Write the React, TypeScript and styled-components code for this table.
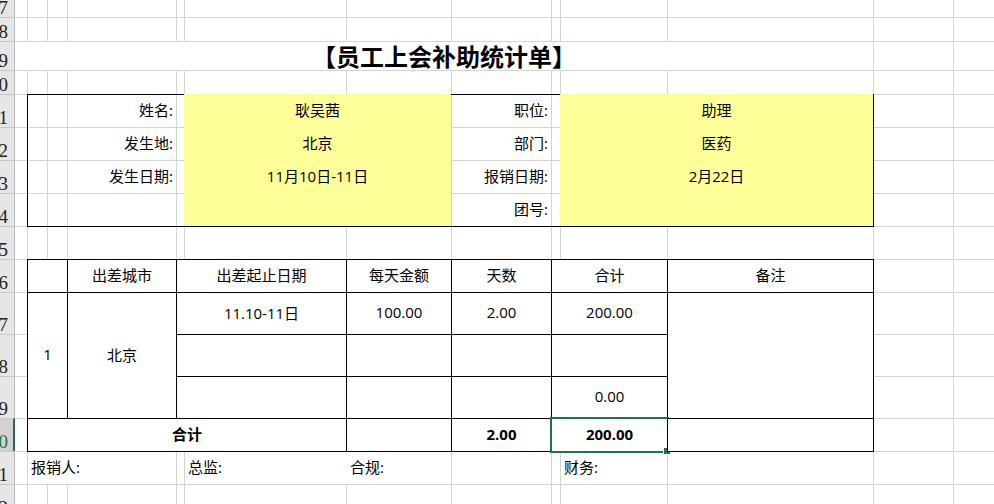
import React from 'react';
import styled, { createGlobalStyle, css } from 'styled-components';

const GRID = '#d4d4d4';
const YELLOW = '#ffff99';
const EXCEL_GREEN = '#217346';

const COLS = ['A', 'B', 'C', 'D', 'E', 'F', 'G', 'H', 'I', 'J', 'K', 'L', 'M'];
// first track is the row header; every other track starts with its gridline pixel
const COL_W = [15, 12, 20, 20, 109, 8, 162, 105, 100, 9, 107, 206, 80, 80];
const ROW_H = [18, 24, 29, 24, 33, 33, 33, 33, 33, 33, 42, 42, 42, 33, 33, 33];
const FIRST_ROW = 7;
const ROWS = ROW_H.map((_, i) => FIRST_ROW + i);

const cc = (a: string, b: string = a) => `${COLS.indexOf(a) + 2} / ${COLS.indexOf(b) + 3}`;
const rr = (a: number, b: number = a) => `${a - FIRST_ROW + 1} / ${b - FIRST_ROW + 2}`;

const INFO = [
  { row: 11, label: '姓名:', value: '耿吴茜', label2: '职位:', value2: '助理' },
  { row: 12, label: '发生地:', value: '北京', label2: '部门:', value2: '医药' },
  { row: 13, label: '发生日期:', value: '11月10日-11日', label2: '报销日期:', value2: '2月22日' },
  { row: 14, label: '', value: '', label2: '团号:', value2: '' },
];

const HEADERS: [string, string, string][] = [
  ['B', 'C', ''],
  ['D', 'D', '出差城市'],
  ['E', 'F', '出差起止日期'],
  ['G', 'G', '每天金额'],
  ['H', 'H', '天数'],
  ['I', 'J', '合计'],
  ['K', 'K', '备注'],
];

const DETAIL = [
  { row: 17, period: '11.10-11日', daily: '100.00', days: '2.00', total: '200.00' },
  { row: 18, period: '', daily: '', days: '', total: '' },
  { row: 19, period: '', daily: '', days: '', total: '0.00' },
];

const GlobalStyle = createGlobalStyle`
  *, *::before, *::after { box-sizing: border-box; }
  html, body {
    margin: 0;
    padding: 0;
    background: #fff;
    overflow: hidden;
  }
  body {
    font-family: "Open Sans", "Noto Sans CJK SC", sans-serif;
    color: #000;
  }
`;

const Sheet = styled.div`
  display: grid;
  grid-template-columns: ${COL_W.map((w) => `${w}px`).join(' ')};
  grid-template-rows: ${ROW_H.map((h) => `${h}px`).join(' ')};
  width: max-content;
  margin-top: -1px;
`;

const placed = css<{ $c: string; $r: string }>`
  grid-column: ${({ $c }) => $c};
  grid-row: ${({ $r }) => $r};
`;

const RowHead = styled.div<{ $r: string; $active?: boolean }>`
  grid-column: 1;
  grid-row: ${({ $r }) => $r};
  display: flex;
  align-items: flex-end;
  justify-content: flex-end;
  overflow: hidden;
  white-space: nowrap;
  border-top: 1px solid #c6c6c6;
  border-right: ${({ $active }) => ($active ? `2px solid ${EXCEL_GREEN}` : '1px solid #b9b9b9')};
  padding-right: ${({ $active }) => ($active ? 5 : 6)}px;
  background: ${({ $active }) => ($active ? '#d2d2d2' : '#e6e6e6')};
  color: ${({ $active }) => ($active ? EXCEL_GREEN : '#222')};
  font: 19px/19px "Liberation Serif", serif;
`;

const GridCell = styled.div<{ $c: string; $r: string; $edge: boolean }>`
  ${placed};
  border-top: 1px solid ${GRID};
  border-left: ${({ $edge }) => ($edge ? `1px solid ${GRID}` : 'none')};
`;

const Merged = styled.div<{ $c: string; $r: string }>`
  ${placed};
  display: flex;
  align-items: center;
  justify-content: center;
  background: #fff;
  border-top: 1px solid ${GRID};
`;

const Title = styled.h1`
  margin: 0;
  font-family: "Noto Sans CJK SC", sans-serif;
  font-size: 24px;
  font-weight: 700;
  line-height: 1;
`;

type Align = 'left' | 'center' | 'right';

const Cell = styled.div<{ $c: string; $r: string; $align?: Align; $fill?: string; $bold?: boolean }>`
  ${placed};
  position: relative;
  display: flex;
  align-items: center;
  justify-content: ${({ $align }) =>
    $align === 'left' ? 'flex-start' : $align === 'right' ? 'flex-end' : 'center'};
  padding: 0 3px 3px;
  white-space: nowrap;
  font-size: 15px;
  font-weight: ${({ $bold }) => ($bold ? 700 : 400)};
  background: ${({ $fill }) => $fill ?? 'transparent'};
`;

// a bordered table cell: its right/bottom border lands on the next gridline
const Box = styled(Cell)`
  background: #fff;
  border: 1px solid #000;
  margin: 0 -1px -1px 0;
`;

const Frame = styled.div<{ $c: string; $r: string }>`
  ${placed};
  border: 1px solid #000;
  margin: 0 -1px -1px 0;
  pointer-events: none;
`;

const FooterCell = styled(Cell)<{ $open?: boolean }>`
  background: #fff;
  border-top: 1px solid ${GRID};
  border-left: ${({ $open }) => ($open ? 'none' : `1px solid ${GRID}`)};
  padding-left: ${({ $open }) => ($open ? 4 : 3)}px;
`;

const Selection = styled.div`
  position: absolute;
  inset: -2px;
  border: 2px solid ${EXCEL_GREEN};
  pointer-events: none;
`;

const FillHandle = styled.span`
  position: absolute;
  right: -4px;
  bottom: -4px;
  width: 8px;
  height: 8px;
  background: ${EXCEL_GREEN};
  border: 1px solid #fff;
`;

export default function App() {
  return (
    <>
      <GlobalStyle />
      <Sheet>
        {ROWS.map((r) => (
          <RowHead key={`h${r}`} $r={rr(r)} $active={r === 20}>
            <span>{r}</span>
          </RowHead>
        ))}
        {ROWS.map((r) =>
          COLS.map((c) => <GridCell key={`${c}${r}`} $c={cc(c)} $r={rr(r)} $edge={c !== 'A'} />)
        )}

        <Merged $c={cc('A', 'K')} $r={rr(9)}>
          <Title>【员工上会补助统计单】</Title>
        </Merged>

        {INFO.map((it) => (
          <React.Fragment key={it.row}>
            <Cell $c={cc('D')} $r={rr(it.row)} $align="right">
              {it.label}
            </Cell>
            <Cell $c={cc('F', 'G')} $r={rr(it.row)} $fill={YELLOW}>
              {it.value}
            </Cell>
            <Cell $c={cc('H')} $r={rr(it.row)} $align="right">
              {it.label2}
            </Cell>
            <Cell $c={cc('J', 'K')} $r={rr(it.row)} $fill={YELLOW}>
              {it.value2}
            </Cell>
          </React.Fragment>
        ))}
        <Frame $c={cc('B', 'K')} $r={rr(11, 14)} />

        <FooterCell $c={cc('B', 'D')} $r={rr(21)} $align="left">报销人:</FooterCell>
        <FooterCell $c={cc('F')} $r={rr(21)} $align="left">总监:</FooterCell>
        <FooterCell $c={cc('G')} $r={rr(21)} $align="left" $open>合规:</FooterCell>
        <FooterCell $c={cc('J')} $r={rr(21)} $align="left">财务:</FooterCell>

        {HEADERS.map(([a, b, text]) => (
          <Box key={a} $c={cc(a, b)} $r={rr(16)}>
            {text}
          </Box>
        ))}

        <Box $c={cc('B', 'C')} $r={rr(17, 19)}>1</Box>
        <Box $c={cc('D')} $r={rr(17, 19)}>北京</Box>
        {DETAIL.map((d) => (
          <React.Fragment key={d.row}>
            <Box $c={cc('E', 'F')} $r={rr(d.row)}>{d.period}</Box>
            <Box $c={cc('G')} $r={rr(d.row)}>{d.daily}</Box>
            <Box $c={cc('H')} $r={rr(d.row)}>{d.days}</Box>
            <Box $c={cc('I', 'J')} $r={rr(d.row)}>{d.total}</Box>
          </React.Fragment>
        ))}
        <Box $c={cc('K')} $r={rr(17, 19)} />

        <Box $c={cc('B', 'F')} $r={rr(20)} $bold>合计</Box>
        <Box $c={cc('G')} $r={rr(20)} />
        <Box $c={cc('H')} $r={rr(20)} $bold>2.00</Box>
        <Box $c={cc('I', 'J')} $r={rr(20)} $bold>
          200.00
          <Selection>
            <FillHandle />
          </Selection>
        </Box>
        <Box $c={cc('K')} $r={rr(20)} />
      </Sheet>
    </>
  );
}
